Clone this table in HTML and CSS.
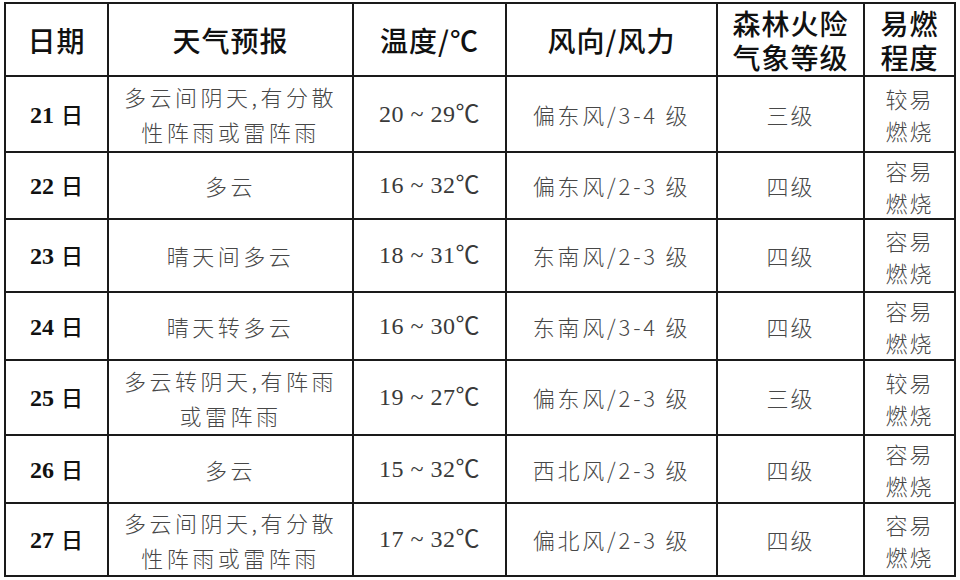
FILE: index.html
```html
<!DOCTYPE html>
<html lang="zh-CN">
<head>
<meta charset="utf-8">
<link rel="stylesheet" href="styles.css">
</head>
<body>
<table class="fc">
  <colgroup>
    <col class="c-date"><col class="c-wx"><col class="c-temp"><col class="c-wind"><col class="c-lvl"><col class="c-burn">
  </colgroup>
  <thead>
    <tr class="r-head">
      <th>日期</th>
      <th>天气预报</th>
      <th>温度/℃</th>
      <th>风向/风力</th>
      <th class="two">森林火险<br>气象等级</th>
      <th class="two">易燃<br>程度</th>
    </tr>
  </thead>
  <tbody>
    <tr class="r1">
      <td class="date"><b>21</b> 日</td>
      <td class="wx">多云间阴天,有分散<br>性阵雨或雷阵雨</td>
      <td class="temp">20 ~ 29℃</td>
      <td class="wind">偏东风/3-4 级</td>
      <td class="lvl">三级</td>
      <td class="burn"><span class="ln">较易</span><span class="ln">燃烧</span></td>
    </tr>
    <tr class="r2">
      <td class="date"><b>22</b> 日</td>
      <td class="wx">多云</td>
      <td class="temp">16 ~ 32℃</td>
      <td class="wind">偏东风/2-3 级</td>
      <td class="lvl">四级</td>
      <td class="burn"><span class="ln">容易</span><span class="ln">燃烧</span></td>
    </tr>
    <tr class="r3">
      <td class="date"><b>23</b> 日</td>
      <td class="wx">晴天间多云</td>
      <td class="temp">18 ~ 31℃</td>
      <td class="wind">东南风/2-3 级</td>
      <td class="lvl">四级</td>
      <td class="burn"><span class="ln">容易</span><span class="ln">燃烧</span></td>
    </tr>
    <tr class="r4">
      <td class="date"><b>24</b> 日</td>
      <td class="wx">晴天转多云</td>
      <td class="temp">16 ~ 30℃</td>
      <td class="wind">东南风/3-4 级</td>
      <td class="lvl">四级</td>
      <td class="burn"><span class="ln">容易</span><span class="ln">燃烧</span></td>
    </tr>
    <tr class="r5">
      <td class="date"><b>25</b> 日</td>
      <td class="wx">多云转阴天,有阵雨<br>或雷阵雨</td>
      <td class="temp">19 ~ 27℃</td>
      <td class="wind">偏东风/2-3 级</td>
      <td class="lvl">三级</td>
      <td class="burn"><span class="ln">较易</span><span class="ln">燃烧</span></td>
    </tr>
    <tr class="r6">
      <td class="date"><b>26</b> 日</td>
      <td class="wx">多云</td>
      <td class="temp">15 ~ 32℃</td>
      <td class="wind">西北风/2-3 级</td>
      <td class="lvl">四级</td>
      <td class="burn"><span class="ln">容易</span><span class="ln">燃烧</span></td>
    </tr>
    <tr class="r7">
      <td class="date"><b>27</b> 日</td>
      <td class="wx">多云间阴天,有分散<br>性阵雨或雷阵雨</td>
      <td class="temp">17 ~ 32℃</td>
      <td class="wind">偏北风/2-3 级</td>
      <td class="lvl">四级</td>
      <td class="burn"><span class="ln">容易</span><span class="ln">燃烧</span></td>
    </tr>
  </tbody>
</table>
</body>
</html>
```
FILE: styles.css
```css
html, body {
  margin: 0;
  padding: 0;
  background: #fff;
}
body {
  font-family: "Noto Sans CJK SC", "Liberation Sans", sans-serif;
}
.fc {
  border-collapse: collapse;
  table-layout: fixed;
  width: 952px;
  margin: 2px 0 0 4px;
}
.c-date { width: 103px; }
.c-wx { width: 245px; }
.c-temp { width: 153px; }
.c-wind { width: 211px; }
.c-lvl { width: 147px; }
.c-burn { width: 91px; }

.fc th, .fc td {
  border: 2px solid #1a1a1a;
  padding: 0;
  text-align: center;
  vertical-align: middle;
  overflow: hidden;
}
.fc th {
  font-family: "Noto Sans CJK SC", sans-serif;
  font-weight: 500;
  font-size: 28px;
  line-height: 36px;
  color: #111;
  letter-spacing: 1px;
}
.fc th.two { line-height: 34px; }
.ln { display: block; }

.fc td {
  font-size: 22px;
  line-height: 35px;
  color: #474747;
  font-weight: 300;
  letter-spacing: 2px;
}
.fc td.wx { letter-spacing: 3.5px; }
.fc td.date {
  color: #111;
  font-weight: 500;
  letter-spacing: 0;
}
.fc td.date b {
  font-family: "Liberation Serif", serif;
  font-weight: 700;
  font-size: 24px;
  margin-right: 2px;
}
.fc td.temp {
  font-family: "Liberation Serif", "Noto Sans CJK SC", serif;
  font-size: 24px;
  font-weight: 400;
  letter-spacing: 0.5px;
  color: #3a3a3a;
}
.fc td.wind { letter-spacing: 2.8px; }
.fc td.burn .ln {
  line-height: 32px;
  letter-spacing: 2px;
}

.r-head { height: 73px; }
.r1 { height: 76px; }
.r2 { height: 67px; }
.r3 { height: 73px; }
.r4 { height: 68px; }
.r5 { height: 75px; }
.r6 { height: 68px; }
.r7 { height: 73px; }
```
